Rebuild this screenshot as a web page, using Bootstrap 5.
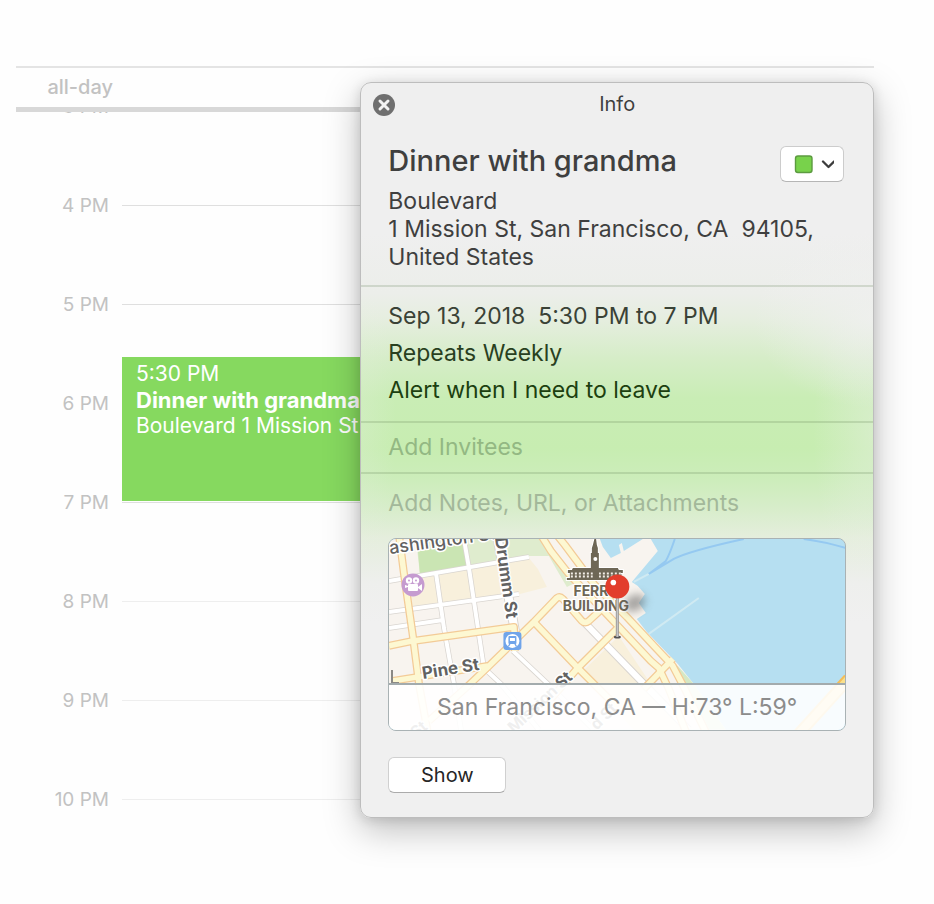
<!DOCTYPE html>
<html lang="en">
<head>
<meta charset="utf-8">
<meta name="viewport" content="width=device-width, initial-scale=1">
<title>Calendar event info</title>
<link href="https://cdn.jsdelivr.net/npm/bootstrap@5.3.0/dist/css/bootstrap.min.css" rel="stylesheet">
<style>
body { font-family: Inter, "Liberation Sans", sans-serif; background: #fefefe; color: #3f3f3f; }
.page { padding: 66px 60px 40px 16px; }
.all-day { height: 41px; border-top: 2px solid #e4e4e4; color: #c2c2c2; font-size: 20px; line-height: 38px; font-weight: 500; }
.all-day span { width: 97px; }
.grid-scroll { border-top: 5px solid #d8d8d8; }
.hours { margin-top: -55px; }
.hour { height: 99px; gap: 13px; }
.hour span { width: 93px; color: #c2c2c2; font-size: 19px; line-height: 24px; }
.hour i { height: 1px; background: #dfdfdf; }
.hour.late i { background: #eee; }
.event { top: 245px; left: 106px; right: 0; height: 144px; padding: 4px 14px; background: #86d95f; color: #fff; font-size: 21px; line-height: 26px; }
.event .fw-bold { font-size: 22px; }
.info { top: 82px; right: 60px; width: 55%; border: 1px solid #bdbdbd; border-radius: 11px; color: #3f3f3f;
  background:
    radial-gradient(ellipse 120px 90px at 100% 235px, rgba(240,240,240,.8), rgba(240,240,240,0)),
    radial-gradient(ellipse 60px 160px at 100% 350px, rgba(236,240,234,.4), rgba(236,240,234,0)),
    radial-gradient(ellipse 35px 160px at 0 340px, rgba(236,240,234,.2), rgba(236,240,234,0)),
    linear-gradient(#efefef 0, #efefef 150px, #eceeea 210px, #e6eee0 235px, #d6edc8 275px, #c9edb5 315px, #c7edb1 365px, #ccedba 395px, #d7edca 425px, #e5eedd 455px, #eeefed 500px, #f0f0f0 540px);
  box-shadow: 0 12px 36px rgba(0,0,0,.26), 0 2px 12px rgba(0,0,0,.12); }
.info-bar { height: 42px; }
.info-bar h2 { font-size: 20px; line-height: 43px; font-weight: 400; }
.close-btn { left: 11px; top: 10px; line-height: 0; }
.sect { padding: 0 27px; font-size: 23px; }
.sect + .sect { border-top: 2px solid rgba(90,120,75,.2); }
.heading { padding-top: 19px; padding-bottom: 14px; }
.heading h1 { font-size: 29px; line-height: 34px; font-weight: 500; }
.heading address { line-height: 28px; padding-top: 5px; white-space: pre-line; }
.swatch-btn { margin: 2px 2px 0 0; width: 64px; height: 36px; background: #fff; border: 1px solid #ccc; border-bottom-color: #b5b5b5; border-radius: 6px; }
.when { padding-top: 11px; padding-bottom: 12px; line-height: 37px; }
.when p:nth-child(1) { color: #3a4236; }
.when p:nth-child(2) { color: #29401f; }
.when p:nth-child(3) { color: #1c4010; }
.field { font-size: 23px; line-height: 30px; color: #29401f; }
.field::placeholder { color: #93b883; opacity: 1; }
.field.notes::placeholder { color: #a3b89a; }
.invite { padding-top: 9px; padding-bottom: 10px; }
.extra { padding-top: 14px; padding-bottom: 24px; }
.map { margin-top: 20px; border: 1px solid #a9b2b4; border-radius: 8px; background: #b6dff1; }
.map svg { font-family: Inter, sans-serif; }
.weather { height: 47px; line-height: 44px; border-top: 2px solid #a3abad; background: rgba(255,255,255,.9); background-clip: padding-box; color: #8c8c8c; font-size: 23px; }
.show-btn { margin-top: 26px; width: 118px; height: 36px; background: #fff; border: 1px solid #d0d0d0; border-bottom-color: #ababab; border-radius: 6px; color: #262626; font-size: 20px; line-height: 32px; }
</style>
</head>
<body>
<main class="page position-relative">
  <div class="all-day text-end"><span class="d-block">all-day</span></div>
  <div class="grid-scroll overflow-hidden position-relative">
    <div class="hours">
      <div class="hour d-flex align-items-center"><span class="text-end">3 PM</span><i class="flex-grow-1"></i></div>
      <div class="hour d-flex align-items-center"><span class="text-end">4 PM</span><i class="flex-grow-1"></i></div>
      <div class="hour d-flex align-items-center"><span class="text-end">5 PM</span><i class="flex-grow-1"></i></div>
      <div class="hour d-flex align-items-center"><span class="text-end">6 PM</span><i class="flex-grow-1"></i></div>
      <div class="hour d-flex align-items-center"><span class="text-end">7 PM</span><i class="flex-grow-1"></i></div>
      <div class="hour late d-flex align-items-center"><span class="text-end">8 PM</span><i class="flex-grow-1"></i></div>
      <div class="hour late d-flex align-items-center"><span class="text-end">9 PM</span><i class="flex-grow-1"></i></div>
      <div class="hour late d-flex align-items-center"><span class="text-end">10 PM</span><i class="flex-grow-1"></i></div>
    </div>
    <div class="event position-absolute overflow-hidden text-nowrap">
      <div>5:30 PM</div>
      <div class="fw-bold">Dinner with grandma</div>
      <div>Boulevard 1 Mission St</div>
    </div>
  </div>

  <section class="info position-absolute" aria-label="Info">
    <div class="info-bar position-relative text-center">
      <button type="button" class="close-btn btn p-0 border-0 position-absolute" aria-label="Close">
        <svg width="24" height="24" viewBox="0 0 24 24"><circle cx="12" cy="12" r="11" fill="#6f6f6f"/><path d="M8 8l8 8M16 8l-8 8" stroke="#f4f4f4" stroke-width="3" stroke-linecap="round"/></svg>
      </button>
      <h2 class="m-0">Info</h2>
    </div>
    <div class="sect heading">
      <div class="d-flex justify-content-between">
        <h1 class="m-0">Dinner with grandma</h1>
        <button type="button" class="swatch-btn btn p-0 d-flex align-items-center justify-content-center" aria-label="Calendar color">
          <svg width="44" height="20" viewBox="0 0 44 20"><rect x="5.500" y="2" width="16.500" height="16.500" rx="2.500" fill="#78d24b" stroke="#5c9b40" stroke-width="1.400"/><path d="M33.500 7.500l5.500 5.500 5.500-5.500" fill="none" stroke="#3c3c3c" stroke-width="2.300" stroke-linecap="round" stroke-linejoin="round" transform="translate(-.5 0)" style="overflow:visible"/></svg>
        </button>
      </div>
      <address class="m-0">Boulevard
1 Mission St, San Francisco, CA &nbsp;94105,
United States</address>
    </div>
    <div class="sect when">
      <p class="m-0">Sep 13, 2018 &nbsp;5:30 PM to 7 PM</p>
      <p class="m-0">Repeats Weekly</p>
      <p class="m-0">Alert when I need to leave</p>
    </div>
    <div class="sect invite">
      <input class="field d-block w-100 border-0 p-0 bg-transparent" type="text" placeholder="Add Invitees" aria-label="Add Invitees">
    </div>
    <div class="sect extra">
      <input class="field notes d-block w-100 border-0 p-0 bg-transparent" type="text" placeholder="Add Notes, URL, or Attachments" aria-label="Add Notes, URL, or Attachments">
      <div class="map position-relative overflow-hidden">
        <svg class="d-block w-100 h-auto" viewBox="0 0 456 191" role="img" aria-label="Map of the Ferry Building area">
          <defs>
            <filter id="soft" x="-50%" y="-50%" width="200%" height="200%"><feGaussianBlur stdDeviation="4"/></filter>
            <linearGradient id="steel"><stop offset="0" stop-color="#888"/><stop offset=".5" stop-color="#ccc"/><stop offset="1" stop-color="#888"/></linearGradient>
            <g id="avenues">
              <path d="M10-4L15 35 24 98 30 145 39 195"/>
              <path d="M0 107L24 102 125 88 126 112"/>
              <path d="M4 142L99 127"/>
              <path d="M40 182L79 147 99 128 145 83 168 59Q171 57 174 60L193 82Q196 85 200 82L214 69"/>
              <path d="M145 83L189 129 228 168"/>
              <path d="M162 160L189 129 230 88"/>
              <path d="M152-4L162 12 180 35 230 88 262 122 270 129 280 150 298 195"/>
              <path d="M168-4L176 6 205 45 238 78 268 110 284 127 296 150 318 195"/>
              <path d="M255 150L284 120"/>
            </g>
          </defs>
          <rect width="456" height="191" fill="#b6dff1"/>
          <path d="M0 0H211L214 8 222 19 232 14 230 6 233 4 235 12 254 0H262L269 12 243 43 249 47 256 55 250 64 257 74 248 80 258 93 289 125 305 145 337 191H0Z" fill="#f8f4ef"/>
          <path d="M282 124L289 127 305 145 337 191H318L292 145Z" fill="#d5e8c4"/>
          <path d="M27 0H155L165 13 174 24 184 45 178 48 168 31 160 17 140 17 76 29 31 36Z" fill="#dfecce"/>
          <path d="M29 12L75 4 79 27 31 36Z" fill="#cae5b3"/>
          <path d="M20 41L140 19 149 30 158 48 131 55 22 72Z" fill="#f8f0dc"/>
          <path d="M192 134L230 97 262 145 300 191H245Z" fill="#f8f0dc"/>
          <path d="M245 43L260 35M260 95L310 59" stroke="#d0eaf2" stroke-width="2"/>
          <path d="M260 35L285 20Q300 12 355 0M260 35L277 22Q281 15 286 0M415 0Q438 3 457 9" fill="none" stroke="#95c9f1" stroke-width="2"/>
          <g fill="none" stroke="#d9d5d0" stroke-width="5.500">
            <path d="M0 42L140 18M0 73L130 55M0 89L54 81M75 0L80 29 95 129 112 145 150 191M47 34L55 89 65 145 72 191M124 112L159 145 205 191"/>
            <path d="M195 83L255 145 300 191" stroke-width="8"/><path d="M108-4L126 92" stroke-width="10"/>
          </g>
          <g fill="none" stroke="#fff" stroke-width="4">
            <path d="M0 42L140 18M0 73L130 55M0 89L54 81M75 0L80 29 95 129 112 145 150 191M47 34L55 89 65 145 72 191M124 112L159 145 205 191"/>
            <path d="M195 83L255 145 300 191" stroke-width="6"/><path d="M108-4L126 92" stroke-width="8"/>
          </g>
          <use href="#avenues" fill="none" stroke="#f3cb97" stroke-width="8" stroke-linejoin="round"/>
          <use href="#avenues" fill="none" stroke="#fdf8d2" stroke-width="5.500" stroke-linejoin="round"/>
          <path d="M410 195L460 140" stroke="#f5bd57" stroke-width="12"/>
          <path d="M410 195L460 140" stroke="#fae18c" stroke-width="8"/>
          <g fill="#626262" stroke="#fff" stroke-width="3" paint-order="stroke" stroke-linejoin="round" font-weight="700">
            <text transform="translate(1 15) rotate(-8)" font-size="18" font-weight="500">ashington St</text>
            <text transform="translate(106 -1) rotate(82)" font-size="17">Drumm St</text>
            <text transform="translate(34 140) rotate(-9)" font-size="17">Pine St</text>
            <text transform="translate(125 195) rotate(-43)" font-size="16">Mission St</text>
            <text transform="translate(27 200) rotate(-40)" font-size="16">St</text>
            <text transform="translate(208 192) rotate(-45)" font-size="16">d St</text>
          </g>
          <path d="M3 131V144H10" fill="none" stroke="#8b8985" stroke-width="2"/>
          <circle cx="24" cy="46" r="11.500" fill="#c59bd0"/>
          <g fill="#fff"><circle cx="20" cy="41.500" r="3.200"/><circle cx="27" cy="41.500" r="3.200"/><rect x="19" y="45" width="10" height="7" rx="1"/><path d="M29 48l4-3v7l-4-3z"/><path d="M19 47l-3-1v3l3-1z"/></g>
          <g fill="#c59bd0"><circle cx="20" cy="41.500" r="1"/><circle cx="27" cy="41.500" r="1"/></g>
          <rect x="114.500" y="93" width="18" height="18" rx="3" fill="#70a4ea"/>
          <circle cx="123.500" cy="102" r="7" fill="#fff"/>
          <path d="M120.500 97h6q1 0 1 1v6q0 1-1 1h-6q-1 0-1-1v-6q0-1 1-1z" fill="#70a4ea"/><path d="M121 99h5v3h-5z" fill="#fff"/><path d="M121 105l-1.500 2.500M126 105l1.500 2.500" stroke="#70a4ea" stroke-width="1.200"/>
          <g stroke="#fff" stroke-width="2" paint-order="stroke" fill="#6e6756">
            <path d="M206-2h1l1 8 1 3v5h1v15h19l1 2h4v3h-2v5h3v2h-57v-2h3v-5h-2v-3h4l1-2h18V14h1V9l1-3z"/>
          </g>
          <path d="M182 36h51" stroke="#f4efe8" stroke-width="5" stroke-dasharray="2 2"/>
          <path d="M204 31h6v8h-6z" fill="#6e6756"/><circle cx="206.500" cy="20" r="2" fill="#fff"/>
          <path d="M181 36h52" stroke="#6e6756" stroke-width="1"/>
          <g font-size="14" font-weight="700" fill="#6e6756" stroke="#fff" stroke-width="2.500" paint-order="stroke" stroke-linejoin="round" text-anchor="middle">
            <text x="207" y="57">FERRY</text><text x="207" y="72">BUILDING</text>
          </g>
          <ellipse cx="246" cy="64" rx="11" ry="8" fill="#555" opacity=".5" filter="url(#soft)" transform="rotate(-30 246 64)"/>
          <ellipse cx="228.500" cy="98" rx="3.500" ry="1.500" fill="#555"/>
          <rect x="227" y="56" width="3" height="42" fill="url(#steel)"/>
          <circle cx="228.500" cy="47.500" r="12" fill="#e23d2c"/><circle cx="224.500" cy="43.500" r="2.800" fill="#fff"/>
        </svg>
        <div class="weather position-absolute bottom-0 start-0 end-0 text-center text-nowrap">San Francisco, CA — H:73° L:59°</div>
      </div>
      <button type="button" class="show-btn btn p-0 d-block">Show</button>
    </div>
  </section>
</main>
<script src="https://cdn.jsdelivr.net/npm/bootstrap@5.3.0/dist/js/bootstrap.bundle.min.js"></script>
</body>
</html>
